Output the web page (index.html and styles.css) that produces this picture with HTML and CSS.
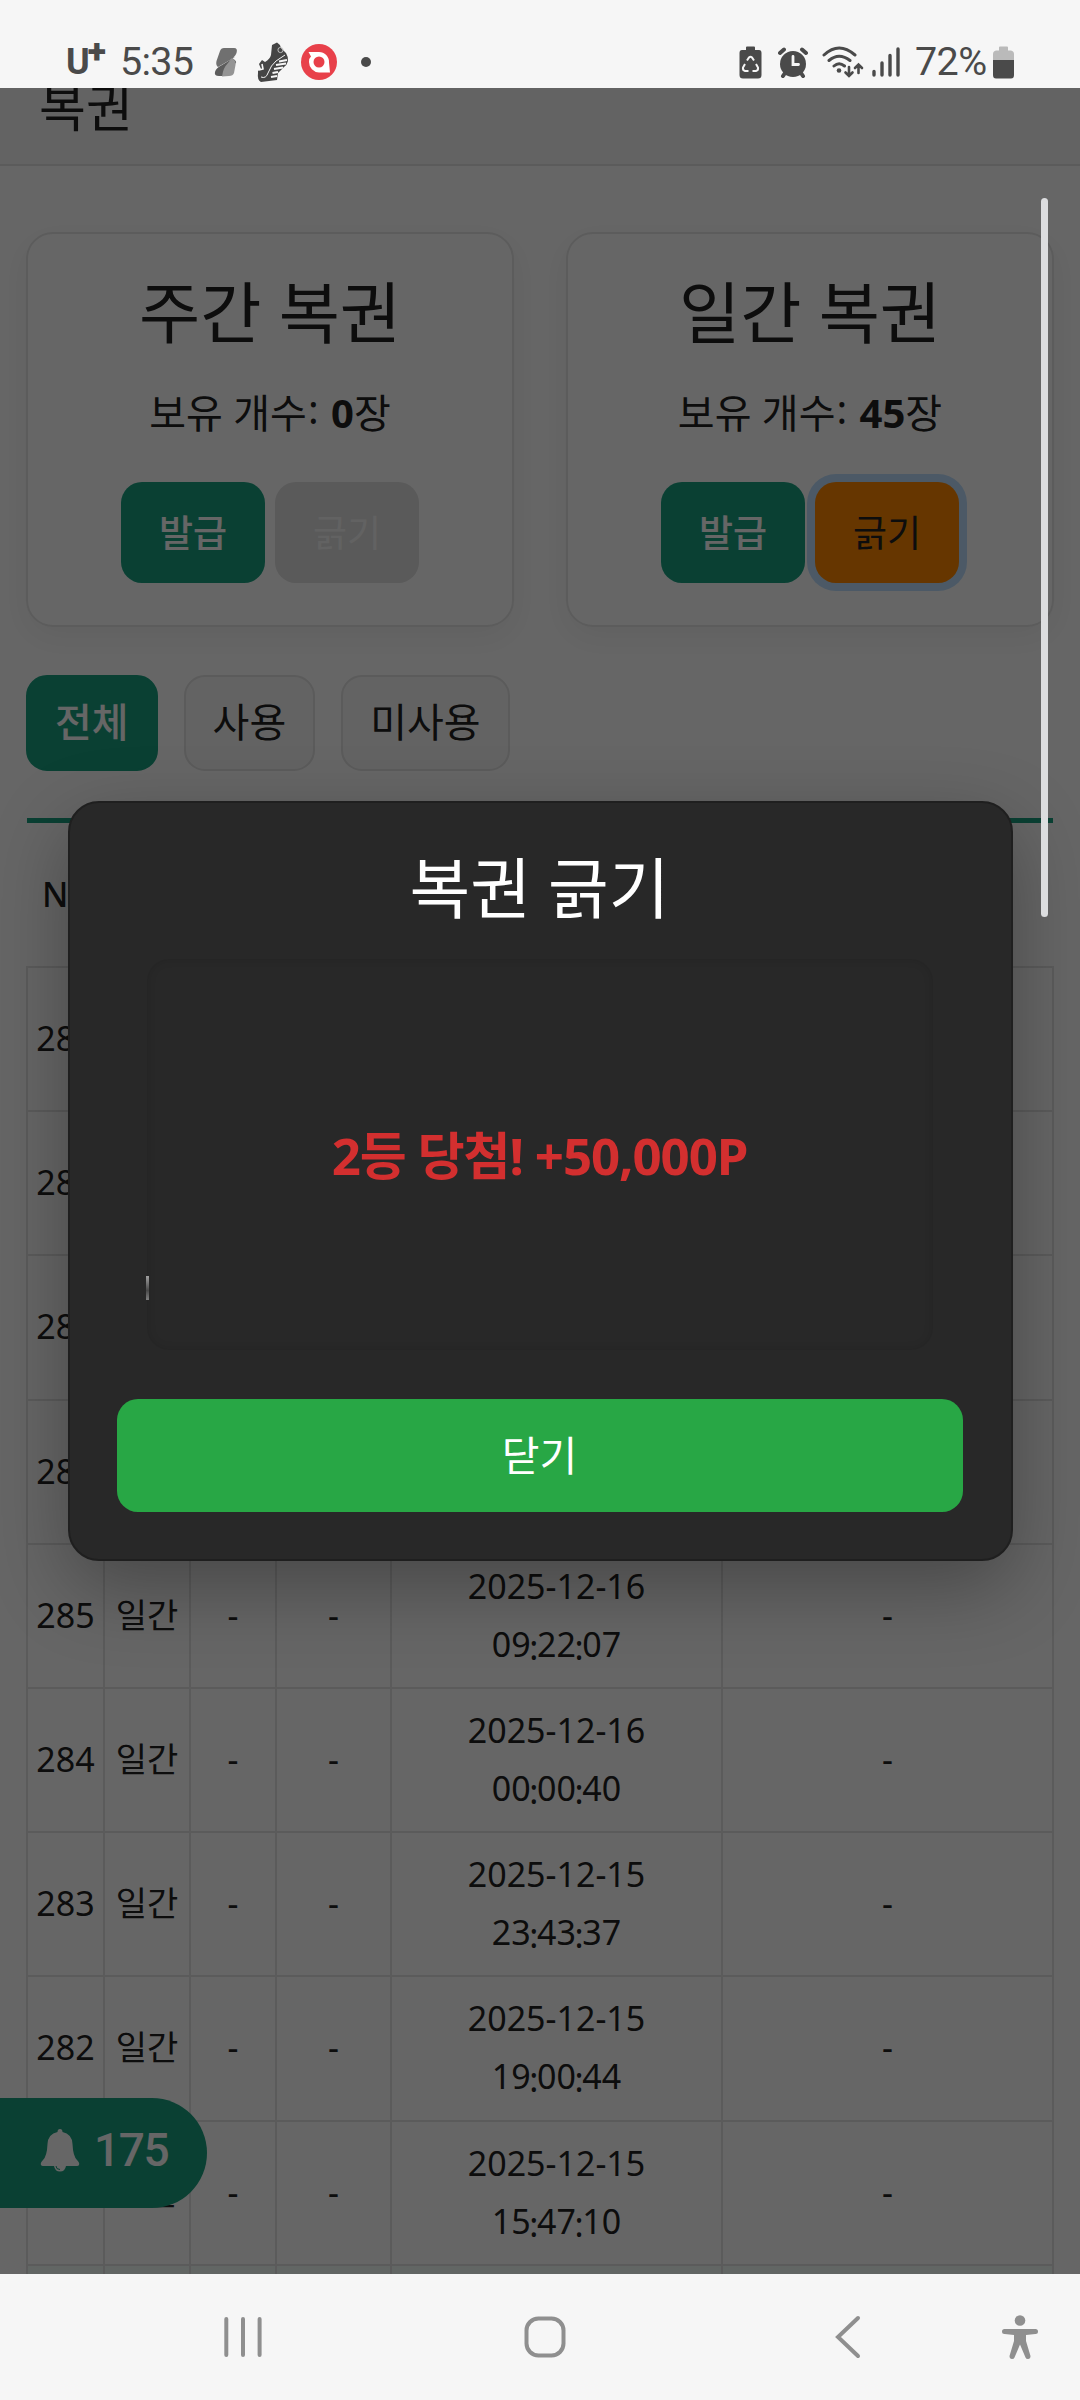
FILE: index.html
```html
<!DOCTYPE html>
<html lang="ko">
<head>
<meta charset="utf-8">
<title>복권</title>
<link rel="stylesheet" href="styles.css">
</head>
<body>
<div class="phone">
  <header class="status">
    <div class="status-left">
      <span class="carrier">U<sup>+</sup></span>
      <span class="clock">5:35</span>
      <svg class="ic-s" viewBox="0 0 24 30" width="24" height="30"><path d="M6 4Q7 1 10 1L20 1Q24 1 22.500 6Q21 10 16 13L4 20Q1.500 18 2.500 14Z" fill="#707070"/><path d="M21 10L8 18Q2 21 1 25Q0 29 5 29L10 29Q12 20 22 16Q23 14 18 11Z" fill="#5c5c5c"/><path d="M18 11Q22.500 14 21.500 18L20 26Q19 29 15 29L8 29.500Q9 21 14 16Z" fill="#949494"/></svg>
      <svg class="ic-shoe" viewBox="0 0 32 40" width="32" height="40"><path d="M15 3L20 .5Q23 2 24 6L29 11Q31 14 31 19Q30 23 27 25L21 31L20 38L4 40Q0 38 1 31L1 29L4 27L2 22L5 18L8 20Q13 17 14 13Z" fill="#454545"/><path d="M4 35Q9 37 11 31Q14 23 19 19L28 13" fill="none" stroke="#f6f6f6" stroke-width="1"/><path d="M22 19.500L30 18M19 23L29 21.500M17 27L26 25.500M15.500 31L21 30M14 35L20 34" fill="none" stroke="#f6f6f6" stroke-width="2"/><path d="M2 28L6 27L5 22" fill="none" stroke="#f6f6f6" stroke-width="1.600"/><circle cx="23.500" cy="8" r="2.600" fill="none" stroke="#c8c8c8" stroke-width=".9"/></svg>
      <svg class="ic-red" viewBox="0 0 36 36" width="36" height="36"><circle cx="18" cy="18" r="18" fill="#e8404a"/><path d="M7.500 8H18A10 10 0 0 1 28 18.500L29 28.500H18A10.500 10.500 0 0 1 8 18Q8 14 10 12.500Z" fill="#fff"/><circle cx="18" cy="18" r="5.500" fill="#e8404a"/></svg>
      <span class="dot"></span>
    </div>
    <div class="status-right">
      <svg class="ic-rec" viewBox="0 0 23 33" width="23" height="33"><path d="M7 1.500Q7 .5 8 .5H15Q16 .5 16 1.500V4H20Q22.500 4 22.500 7V29Q22.500 32.500 19 32.500H4Q.5 32.500 .5 29V7Q.5 4 3 4H7Z" fill="#4a4a4a"/><path d="M8 14.500L10 11.500Q11.500 10 13 11.500L15 14.500M17 18L19 21.500Q19.500 24.500 17 25H13.500M9.500 25H6Q3.500 24.500 4 21.500L6 18" fill="none" stroke="#f6f6f6" stroke-width="2"/></svg>
      <svg class="ic-alarm" viewBox="0 0 30 32" width="30" height="32"><circle cx="15" cy="18" r="13" fill="#4a4a4a"/><path d="M2 7L6 3.500M28 7L24 3.500M5 30L7 27M25 30L23 27" stroke="#4a4a4a" stroke-width="4" stroke-linecap="round"/><path d="M15 10.500V18.500H20.500" fill="none" stroke="#f6f6f6" stroke-width="2.800" stroke-linecap="round"/></svg>
      <svg class="ic-wifi" viewBox="0 0 42 32" width="42" height="32"><g fill="none" stroke="#4a4a4a" stroke-width="3" stroke-linecap="round"><path d="M2 9Q17-5 33 9M7 14.500Q17 6 28 14.500M12 20Q17 15.500 22.500 20"/><path d="M27 21V29.500M23.500 26.500L27 30L30.500 26.500M36.500 27V20M33 22L36.500 18.500L40 22" stroke-width="2.600"/></g><circle cx="17" cy="24.500" r="2.300" fill="#4a4a4a"/></svg>
      <svg class="ic-sig" viewBox="0 0 28 30" width="28" height="30"><path d="M2 24.500V28M10 16V28M18 8.500V28M26 2V28" stroke="#4a4a4a" stroke-width="3.400" stroke-linecap="round"/></svg>
      <span class="pct">72%</span>
      <svg class="ic-bat" viewBox="0 0 21 33" width="21" height="33"><path d="M6 1.500Q6 .5 7 .5H14Q15 .5 15 1.500V4.500H18Q21 5 21 8V14H0V8Q0 5 3 4.500H6Z" fill="#bababa"/><path d="M0 14H21V29Q21 32.500 18 32.500H3Q0 32.500 0 29Z" fill="#4a4a4a"/></svg>
    </div>
  </header>

  <main class="view">
    <div class="page-head"><span>복권</span></div>
    <section class="cards">
      <article class="card">
        <h2>주간 복권</h2>
        <p>보유 개수<i class="up">:</i> <b>0</b>장</p>
        <div class="btns"><button class="btn issue">발급</button><button class="btn off">긁기</button></div>
      </article>
      <article class="card">
        <h2>일간 복권</h2>
        <p>보유 개수<i class="up">:</i> <b>45</b>장</p>
        <div class="btns"><button class="btn issue">발급</button><button class="btn scratch">긁기</button></div>
      </article>
    </section>
    <nav class="filters"><span class="tab active">전체</span><span class="tab">사용</span><span class="tab">미사용</span></nav>
    <section class="list">
      <div class="list-head">NO</div>
      <div class="row"><div>289</div><div>일간</div><div>-</div><div>-</div><div></div><div></div></div>
      <div class="row"><div>288</div><div>일간</div><div>-</div><div>-</div><div></div><div></div></div>
      <div class="row"><div>287</div><div>일간</div><div>-</div><div>-</div><div></div><div></div></div>
      <div class="row"><div>286</div><div>일간</div><div>-</div><div>-</div><div></div><div></div></div>
      <div class="row"><div>285</div><div>일간</div><div>-</div><div>-</div><div><p>2025-12-16</p><p>09<i>:</i>22<i>:</i>07</p></div><div>-</div></div>
      <div class="row"><div>284</div><div>일간</div><div>-</div><div>-</div><div><p>2025-12-16</p><p>00<i>:</i>00<i>:</i>40</p></div><div>-</div></div>
      <div class="row"><div>283</div><div>일간</div><div>-</div><div>-</div><div><p>2025-12-15</p><p>23<i>:</i>43<i>:</i>37</p></div><div>-</div></div>
      <div class="row"><div>282</div><div>일간</div><div>-</div><div>-</div><div><p>2025-12-15</p><p>19<i>:</i>00<i>:</i>44</p></div><div>-</div></div>
      <div class="row"><div></div><div>일간</div><div>-</div><div>-</div><div><p>2025-12-15</p><p>15<i>:</i>47<i>:</i>10</p></div><div>-</div></div>
      <div class="row tint"><div></div><div></div><div></div><div></div><div></div><div></div></div>
    </section>
    <div class="notice">
      <svg viewBox="0 0 40 44" width="40" height="44"><path d="M20 1Q22.500 1 22.500 4Q32 6 32.500 16Q33 28 37 32Q40 35 39 37Q38.500 38 37 38H26Q25 43.500 20 43.500Q15 43.500 14 38H3Q1.500 38 1 37Q0 35 3 32Q7 28 7.500 16Q8 6 17.500 4Q17.500 1 20 1Z" fill="#fff"/><path d="M16 38Q16 41.500 20 41.500" fill="none" stroke="#19a080" stroke-width="1"/></svg>
      <span>175</span>
    </div>
    <div class="overlay">
      <div class="modal">
        <h3>복권 긁기</h3>
        <div class="ticket">2등 당첨! +50,000P<i class="residue"></i></div>
        <button class="close">닫기</button>
      </div>
    </div>
    <div class="scrollbar"></div>
  </main>

  <footer class="nav">
    <svg class="n-recent" viewBox="0 0 40 44" width="40" height="44"><path d="M3.300 4V40M20 4V40M36.600 4V40" stroke="#8f8f8f" stroke-width="4" stroke-linecap="round"/></svg>
    <svg class="n-home" viewBox="0 0 44 44" width="44" height="44"><rect x="3.500" y="3.500" width="37" height="37" rx="12" fill="none" stroke="#8f8f8f" stroke-width="4"/></svg>
    <svg class="n-back" viewBox="0 0 26 44" width="26" height="44"><path d="M23 3L3 22L23 41" fill="none" stroke="#8f8f8f" stroke-width="4" stroke-linecap="round" stroke-linejoin="miter"/></svg>
    <svg class="n-acc" viewBox="0 0 38 46" width="38" height="46"><circle cx="19" cy="6.500" r="5.300" fill="#8f8f8f"/><path d="M3.500 15H34.500Q37 15 37 17.500Q37 20 34.500 20L25 21V27L29.500 42Q29.500 45 27 45Q25 45 24.500 43.500L19 30.500L13.500 43.500Q13 45 11 45Q8.500 45 8.500 42L13 27V21L3.500 20Q1 20 1 17.500Q1 15 3.500 15Z" fill="#8f8f8f"/></svg>
  </footer>
</div>
</body>
</html>
```
FILE: styles.css
```css
* { box-sizing: border-box; margin: 0; padding: 0; }
body { background: #f6f6f6; font-family: "Noto Sans", "Noto Sans CJK KR", sans-serif; color: #222; }
button { border: 0; font-family: inherit; }
i { font-style: normal; }
.phone { width: 1080px; height: 2400px; display: flex; flex-direction: column; overflow: hidden; }

/* status bar */
.status { height: 88px; flex: none; display: flex; justify-content: space-between; padding: 37px 66px 0 66px; color: #4a4a4a; font-family: Roboto, sans-serif; }
.status-left, .status-right { display: flex; align-items: center; height: 50px; }
.carrier { font-size: 36px; font-weight: 700; line-height: 52px; width: 54px; display: flex; }
.carrier sup { font-size: 34px; line-height: 30px; margin-left: -2px; font-weight: 900; }
.clock { font-size: 39.500px; line-height: 50px; letter-spacing: -.7px; width: 94px; }
.ic-s { margin-right: 19px; }
.ic-shoe { margin-right: 12px; }
.dot { width: 10px; height: 10px; border-radius: 50%; background: #4a4a4a; margin-left: 24px; }
.ic-rec { margin-right: 16px; }
.ic-alarm { margin-right: 14px; }
.ic-wifi { margin-right: 8px; }
.ic-sig { margin-right: 15px; }
.pct { font-size: 39.500px; line-height: 50px; letter-spacing: -.6px; width: 78px; }

/* page */
.view { position: relative; height: 2186px; flex: none; overflow: hidden; background: #fff; }
.page-head { height: 78px; background: #f8f8f8; border-bottom: 2px solid #e3e3e3; padding-left: 39px; overflow: hidden; }
.page-head span { display: block; font-size: 51px; line-height: 72px; margin-top: -17px; }
.cards { display: grid; grid-template-columns: 488px 488px; gap: 52px; padding: 66px 26px 0; }
.card { height: 395px; border: 2px solid #e6e6e6; border-radius: 27px; box-shadow: 0 10px 32px rgba(0,0,0,.06); text-align: center; padding-top: 33px; }
.card h2 { font-size: 66.500px; font-weight: 400; line-height: 90px; }
.card p { font-size: 40px; line-height: 60px; margin-top: 26px; }
.card .up { position: relative; top: -4px; margin: 0 2px 0 1px; }
.btns { display: flex; justify-content: center; gap: 10px; margin-top: 39px; }
.btn { width: 144px; height: 101px; padding-bottom: 3px; border-radius: 21px; font-size: 37px; font-weight: 400; color: #fff; }
.issue { background: #19a080; font-weight: 500; }
.off { background: #e0e0e0; color: #f6f6f6; }
.scratch { background: #ff8700; color: #222; box-shadow: 0 0 0 8px #bddfff; }
.filters { display: flex; gap: 26px; padding: 48px 26px 0; }
.tab { height: 96px; line-height: 90px; padding: 0 27px; border: 2px solid #e3e3e3; border-radius: 21px; font-size: 40px; background: #f8f8f8; }
.tab.active { background: #19a080; border-color: #19a080; color: #fff; font-weight: 500; }

/* ticket list */
.list { margin: 47px 26px 0; font-size: 34px; line-height: 58px; }
.list-head { height: 148px; border-top: 5px solid #19a080; margin: 0 1px; padding: 42px 0 0 15px; font-weight: 500; }
.row { display: grid; grid-template-columns: 77px 86px 86px 115px 331px 331px; width: 1028px; height: 144.200px; border-top: 2px solid #e3e3e3; border-left: 2px solid #e3e3e3; text-align: center; }
.row > div { display: flex; flex-direction: column; align-items: center; justify-content: center; padding-bottom: 2px; border-right: 2px solid #e3e3e3; }
.row i { position: relative; top: 3px; margin: 0 -1.400px; }
.tint > div { background: #f5fffb; }
.notice { position: absolute; left: 0; top: 2010px; width: 207px; height: 110px; background: #19a080; border-radius: 0 55px 55px 0; display: flex; align-items: center; padding: 0 0 7px 40px; gap: 14px; color: #fff; font: 500 46px/60px Roboto, sans-serif; letter-spacing: -1.400px; }

/* dialog */
.overlay { position: absolute; inset: 0; background: rgba(0,0,0,.6); }
.modal { position: absolute; left: 68px; top: 713px; width: 945px; height: 760px; background: #282828; border: 2px solid #1f1f1f; border-radius: 31px; box-shadow: 0 26px 78px rgba(0,0,0,.3); display: flex; flex-direction: column; align-items: center; padding: 39px 2px 0 0; color: #fff; }
.modal h3 { font-size: 66px; font-weight: 400; line-height: 90px; }
.ticket { position: relative; width: 786px; height: 391px; margin-top: 27px; border-radius: 22px; box-shadow: inset 0 0 10px rgba(0,0,0,.12); text-align: center; font-size: 51px; letter-spacing: -1.100px; font-weight: 700; line-height: 392px; color: #d32f2f; }
.residue { position: absolute; left: -1px; top: 317px; width: 3px; height: 24px; background: linear-gradient(#a0a0a0, #484848 60%, #808080); }
.close { width: 846px; height: 113px; margin-top: 49px; padding-bottom: 6px; border-radius: 21px; background: #28a745; color: #fff; font-size: 41px; }
.scrollbar { position: absolute; left: 1041px; top: 110px; width: 7px; height: 719px; border-radius: 4px; background: #dcdddf; }

/* navigation bar */
.nav { height: 126px; flex: none; display: flex; align-items: center; padding: 0 41px 0 223px; background: #f6f6f6; }
.n-home { margin-left: 260px; }
.n-back { margin-left: 268px; }
.n-acc { margin-left: auto; }
```
